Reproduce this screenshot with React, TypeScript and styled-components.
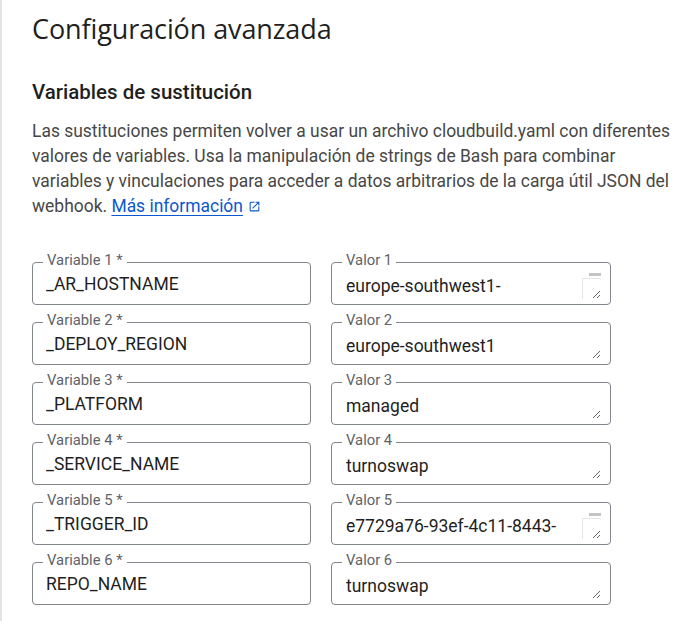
import React from "react";
import styled, { createGlobalStyle } from "styled-components";

const GlobalStyle = createGlobalStyle`
  html, body { margin: 0; padding: 0; background: #ffffff; }
  body { font-family: Roboto, "Liberation Sans", Arial, sans-serif; }
  * { box-sizing: border-box; }
`;

const Page = styled.div`
  min-height: 621px;
  border-left: 2px solid #e3e3e3;
  padding: 13px 0 0 30px;
  background: #ffffff;
`;

const Title = styled.h1`
  margin: 0;
  font-family: "Open Sans", Roboto, sans-serif;
  font-size: 27px;
  line-height: 32px;
  font-weight: 400;
  letter-spacing: -0.1px;
  color: #1f1f1f;
`;

const Subtitle = styled.h2`
  margin: 33px 0 0;
  font-size: 20.5px;
  line-height: 28px;
  font-weight: 500;
  color: #1f1f1f;
`;

const Description = styled.p`
  margin: 13px 0 0;
  font-size: 17.45px;
  line-height: 25px;
  color: #474747;
  max-width: 650px;
`;

const Link = styled.a`
  color: #0b57d0;
  text-decoration: underline;
  text-underline-offset: 3px;
  cursor: pointer;
`;

const LinkIcon = styled.svg`
  width: 13px;
  height: 13px;
  margin-left: 5px;
  vertical-align: -1px;
  fill: #0b57d0;
`;

const Grid = styled.div`
  display: grid;
  grid-template-columns: 279px 280px;
  column-gap: 20px;
  row-gap: 17px;
  margin-top: 43px;
`;

const Field = styled.div<{ $area?: boolean }>`
  position: relative;
  height: 43px;
  border: 1px solid #80868b;
  border-radius: 4px;
  display: flex;
  padding: ${(p) => (p.$area ? "11px 9px 5px 14px" : "0 13px")};
  align-items: ${(p) => (p.$area ? "stretch" : "center")};
`;

const Label = styled.span`
  position: absolute;
  top: -12px;
  left: 10px;
  padding: 0 4px;
  background: #ffffff;
  font-size: 14.8px;
  line-height: 18px;
  color: #5f6368;
  z-index: 2;
`;

const Input = styled.input`
  width: 100%;
  border: none;
  outline: none;
  padding: 0;
  background: transparent;
  font-family: inherit;
  font-size: 17.5px;
  color: #1f1f1f;
`;

const TextArea = styled.textarea`
  position: relative;
  z-index: 1;
  flex: 1;
  border: none;
  outline: none;
  padding: 0;
  margin: 0;
  background: transparent;
  font-family: inherit;
  font-size: 17.5px;
  line-height: 25px;
  color: #1f1f1f;
  resize: vertical;
  overflow: hidden;
  white-space: pre-wrap;
`;

const ScrollThumb = styled.span`
  position: absolute;
  right: 9px;
  top: 10px;
  width: 12px;
  height: 3px;
  background: #c4c4c4;
`;

const ScrollTrack = styled.span`
  position: absolute;
  right: 9px;
  top: 15px;
  width: 19px;
  height: 21px;
  border-left: 1px solid #e6e6e6;
  border-top: 1px solid #e6e6e6;
  background: #ffffff;
  z-index: 0;
`;

type Row = { name: string; value: string; overflow?: boolean };

const rows: Row[] = [
  { name: "_AR_HOSTNAME", value: "europe-southwest1-\ndocker.pkg.dev", overflow: true },
  { name: "_DEPLOY_REGION", value: "europe-southwest1" },
  { name: "_PLATFORM", value: "managed" },
  { name: "_SERVICE_NAME", value: "turnoswap" },
  { name: "_TRIGGER_ID", value: "e7729a76-93ef-4c11-8443-\n3f5b2a7d9c10", overflow: true },
  { name: "REPO_NAME", value: "turnoswap" },
];

export default function App() {
  return (
    <>
      <GlobalStyle />
      <Page>
        <Title>Configuración avanzada</Title>
        <Subtitle>Variables de sustitución</Subtitle>
        <Description>
          Las sustituciones permiten volver a usar un archivo cloudbuild.yaml con diferentes
          valores de variables. Usa la manipulación de strings de Bash para combinar
          variables y vinculaciones para acceder a datos arbitrarios de la carga útil JSON del
          webhook.{" "}
          <Link>Más información</Link>
          <LinkIcon viewBox="0 0 24 24" aria-hidden="true">
            <path d="M19 19H5V5h7V3H5a2 2 0 0 0-2 2v14a2 2 0 0 0 2 2h14c1.1 0 2-.9 2-2v-7h-2v7zM14 3v2h3.59l-9.83 9.83 1.41 1.41L19 6.41V10h2V3h-7z" />
          </LinkIcon>
        </Description>
        <Grid>
          {rows.map((r, i) => (
            <React.Fragment key={r.name}>
              <Field>
                <Label>Variable {i + 1} *</Label>
                <Input defaultValue={r.name} />
              </Field>
              <Field $area>
                <Label>Valor {i + 1}</Label>
                {r.overflow && <ScrollTrack />}
                {r.overflow && <ScrollThumb />}
                <TextArea rows={1} defaultValue={r.value} />
              </Field>
            </React.Fragment>
          ))}
        </Grid>
      </Page>
    </>
  );
}
